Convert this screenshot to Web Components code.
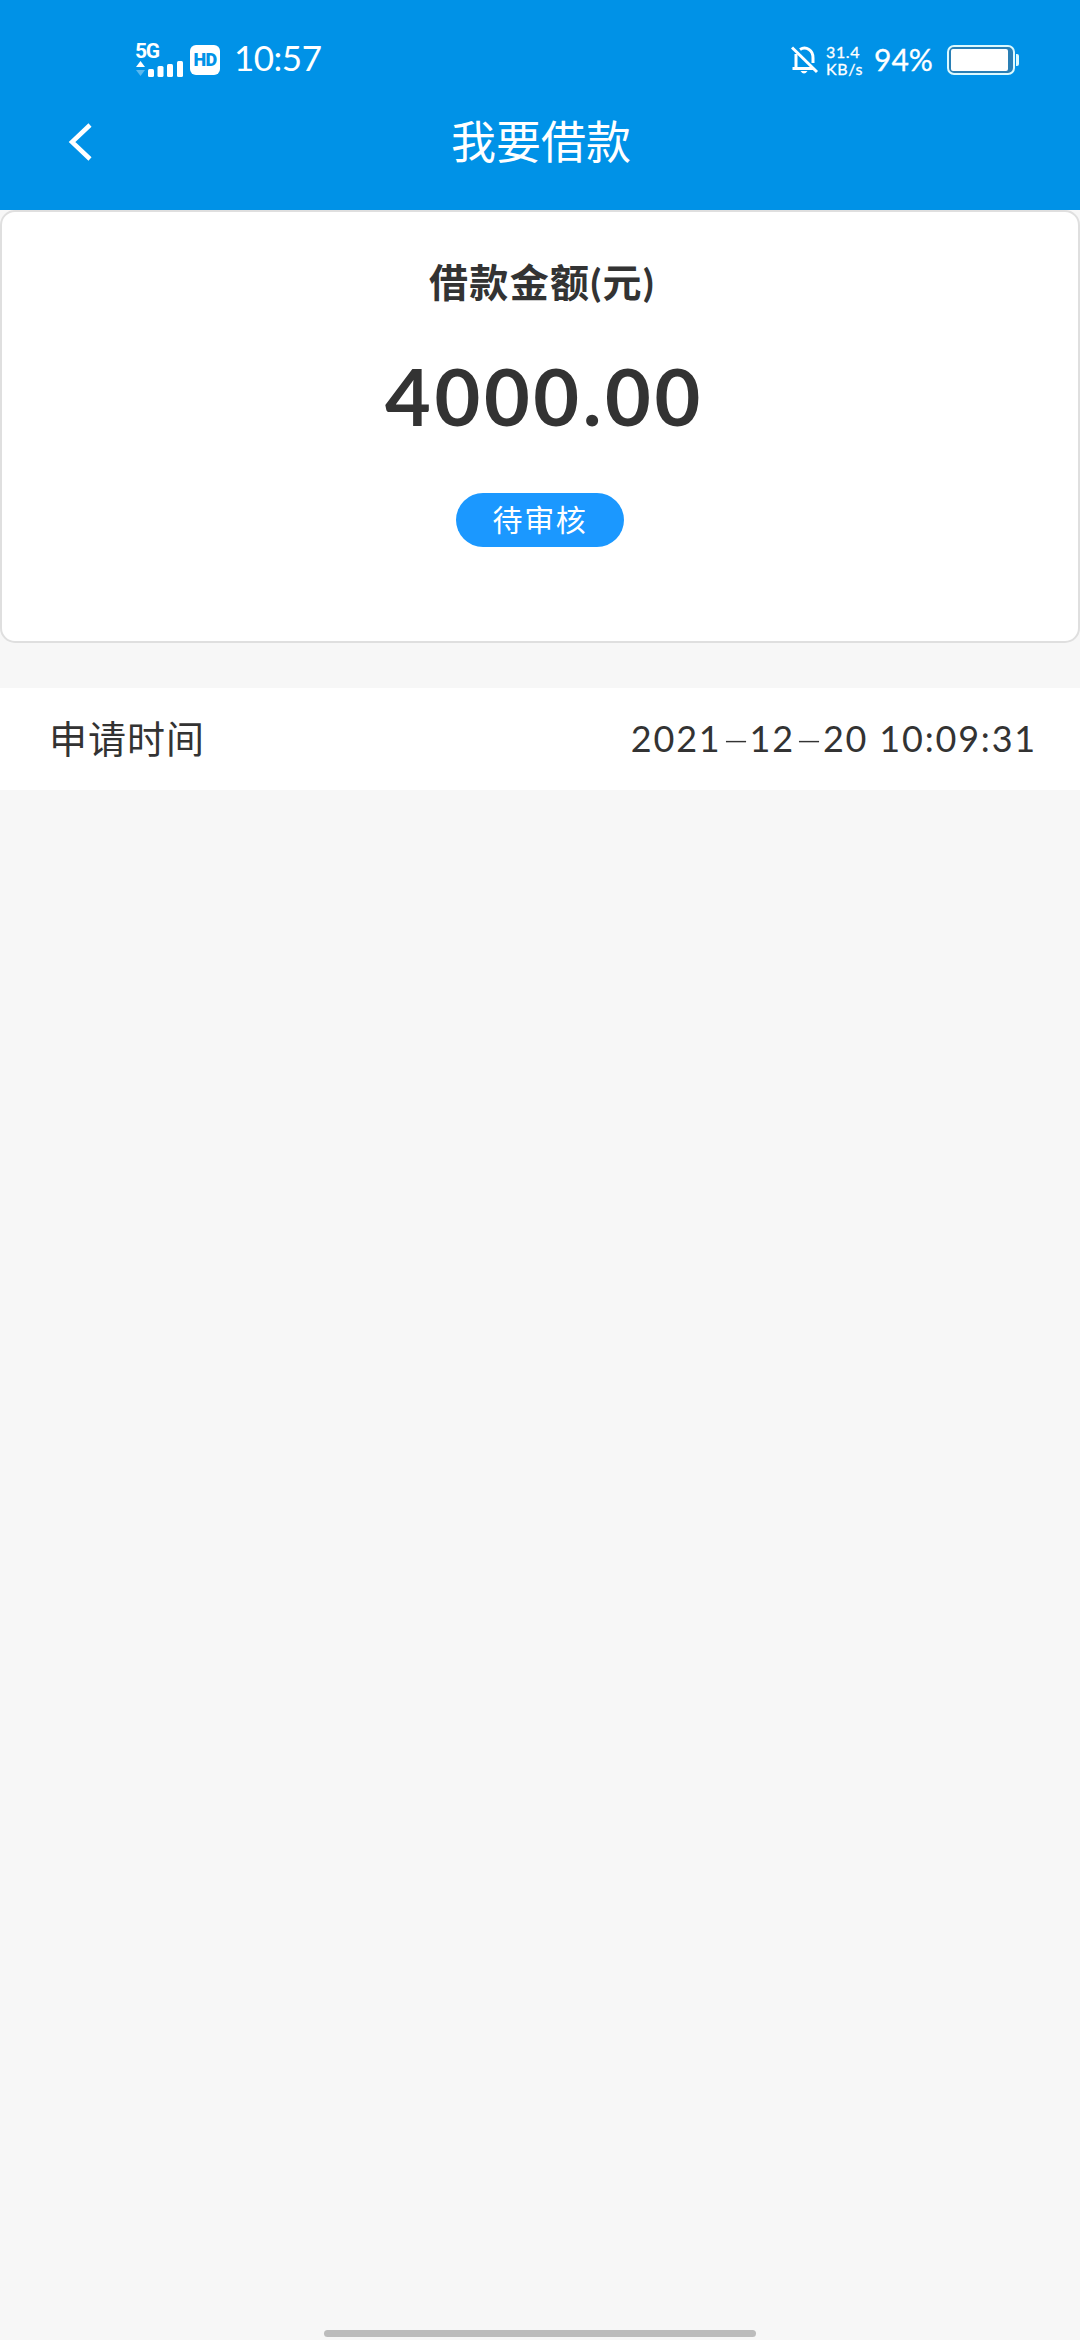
<!DOCTYPE html>
<html lang="zh-CN">
<head>
<meta charset="utf-8">
<title>我要借款</title>
<style>
    html, body {
        margin: 0;
        height: 100%;
    }

    body {
        background: #f7f7f7;
        color: #333;
        font-family: Lato, "Noto Sans CJK SC", sans-serif;
    }
</style>
</head>
<body>
<loan-page>
    <status-bar slot="top" time="10:57" speed="31.4" battery="94"></status-bar>
    <nav-bar slot="top">我要借款</nav-bar>
    <amount-card amount="4000.00" status="待审核">借款金额(元)</amount-card>
    <info-row label="申请时间">2021<i>-</i>12<i>-</i>20 10:09:31</info-row>
</loan-page>

<script>
class LoanPage extends HTMLElement {
    constructor() {
        super();
        this.attachShadow({mode: 'open'});
        this.shadowRoot.innerHTML = `
            <style>
                :host {
                    display: flex;
                    flex-direction: column;
                    height: 2340px;
                    overflow: hidden;
                }

                header {
                    height: 210px;
                    background: #0092e7;
                    color: #fff;
                }

                main {
                    flex: 1;
                    display: flex;
                    flex-direction: column;
                    gap: 45px;
                }

                .home {
                    align-self: center;
                    width: 432px;
                    height: 7px;
                    margin-bottom: 3px;
                    border-radius: 4px;
                    background: #bcbcbc;
                }
            </style>
            <header><slot name="top"></slot></header>
            <main><slot></slot></main>
            <div class="home"></div>
        `;
    }
}

class StatusBar extends HTMLElement {
    constructor() {
        super();
        this.attachShadow({mode: 'open'});
        this.shadowRoot.innerHTML = `
            <style>
                :host {
                    display: flex;
                    align-items: center;
                    box-sizing: border-box;
                    height: 120px;
                    padding: 0 60px 0 135px;
                    white-space: nowrap;
                }

                svg {
                    display: block;
                    flex: none;
                }

                .signal {
                    display: flex;
                    flex-direction: column;
                    width: 55px;
                    height: 34px;
                }

                .signal span {
                    height: 18px;
                    font: 700 21px/16px Roboto, sans-serif;
                    letter-spacing: -1.2px;
                }

                .hd {
                    width: 30px;
                    height: 30px;
                    border-radius: 6px;
                    background: #fff;
                    color: #0092e7;
                    font: 900 18px/30px Roboto, sans-serif;
                    letter-spacing: -0.6px;
                    text-align: center;
                }

                .time {
                    flex: 1;
                    margin: -7px 0 0 14px;
                    font-size: 35px;
                    line-height: 40px;
                    letter-spacing: -0.5px;
                }

                .speed {
                    width: 48px;
                    margin-left: 7px;
                    font-size: 16px;
                    line-height: 17px;
                    letter-spacing: 0.6px;
                    -webkit-text-stroke: 0.3px #fff;
                }

                .percent {
                    width: 73px;
                    margin-top: -2px;
                    font-size: 30px;
                    line-height: 40px;
                    -webkit-text-stroke: 0.3px #fff;
                }
            </style>
            <div class="signal">
                <span>5G</span>
                <svg width="50" height="16" viewBox="0 0 50 16" fill="#fff">
                    <path d="M1 6L5.5 0L10 6Z"/>
                    <path d="M1 9L5.5 15L10 9Z" opacity=".35"/>
                    <rect x="13" y="8" width="6" height="8" rx="1.5"/>
                    <rect x="22.5" y="5" width="6" height="11" rx="1.5"/>
                    <rect x="32" y="3" width="6" height="13" rx="1.5"/>
                    <rect x="42" y="0" width="6" height="16" rx="1.5"/>
                </svg>
            </div>
            <div class="hd">HD</div>
            <div class="time"></div>
            <svg width="28" height="30" viewBox="0 0 28 30" fill="none" stroke="#fff" stroke-width="3">
                <path d="M5 9V22M1.5 23.5H22M9 4.5Q13.5 1.5 18 4.5Q22 7 22 13V18"/>
                <path d="M1 2.5L26 27"/>
                <path d="M9.5 26H16.5Q13 31 9.5 26Z" fill="#fff" stroke="none"/>
            </svg>
            <div class="speed"><div class="rate"></div><div>KB/s</div></div>
            <div class="percent"></div>
            <svg width="73" height="30" viewBox="0 0 73 30">
                <rect x="1" y="1" width="66" height="28" rx="6" fill="#2a7fb5" stroke="#dcfaff" stroke-width="2"/>
                <rect x="4" y="4" width="57" height="22" rx="2" fill="#fff"/>
                <path d="M69 9H70Q72 9 72 11V19Q72 21 70 21H69Z" fill="#dcfaff"/>
            </svg>
        `;
    }

    connectedCallback() {
        this.shadowRoot.querySelector('.time').textContent = this.getAttribute('time');
        this.shadowRoot.querySelector('.rate').textContent = this.getAttribute('speed');
        this.shadowRoot.querySelector('.percent').textContent = this.getAttribute('battery') + '%';
    }
}

class NavBar extends HTMLElement {
    constructor() {
        super();
        this.attachShadow({mode: 'open'});
        this.shadowRoot.innerHTML = `
            <style>
                :host {
                    display: grid;
                    grid-template-columns: 100px 1fr 100px;
                    height: 44px;
                    align-items: center;
                }

                svg {
                    margin-left: 67px;
                }

                h1 {
                    margin: -1px 0 0 2px;
                    font-size: 45px;
                    font-weight: 400;
                    line-height: 44px;
                    text-align: center;
                }
            </style>
            <svg width="26" height="40" viewBox="0 0 26 40" fill="none" stroke="#fff" stroke-width="4.5">
                <path d="M23 3L5 20L23 37"/>
            </svg>
            <h1><slot></slot></h1>
        `;
    }
}

class AmountCard extends HTMLElement {
    constructor() {
        super();
        this.attachShadow({mode: 'open'});
        this.shadowRoot.innerHTML = `
            <style>
                :host {
                    display: flex;
                    flex-direction: column;
                    align-items: center;
                    box-sizing: border-box;
                    height: 433px;
                    padding-top: 46px;
                    border: 2px solid #dfdfdf;
                    border-radius: 15px;
                    background: #fff;
                }

                .title {
                    padding-left: 4px;
                    font-size: 39px;
                    font-weight: 700;
                    line-height: 48px;
                    letter-spacing: 1.4px;
                }

                .amount {
                    margin-top: 42px;
                    padding-left: 9px;
                    font-size: 79px;
                    font-weight: 700;
                    line-height: 96px;
                    letter-spacing: 3.6px;
                }

                .status {
                    width: 168px;
                    height: 54px;
                    margin-top: 49px;
                    border-radius: 27px;
                    background: #1b98ff;
                    color: #fff;
                    font-size: 30px;
                    line-height: 53px;
                    letter-spacing: 1.6px;
                    text-align: center;
                }
            </style>
            <div class="title"><slot></slot></div>
            <div class="amount"></div>
            <div class="status"></div>
        `;
    }

    connectedCallback() {
        this.shadowRoot.querySelector('.amount').textContent = this.getAttribute('amount');
        this.shadowRoot.querySelector('.status').textContent = this.getAttribute('status');
    }
}

class InfoRow extends HTMLElement {
    constructor() {
        super();
        this.attachShadow({mode: 'open'});
        this.shadowRoot.innerHTML = `
            <style>
                :host {
                    display: flex;
                    align-items: center;
                    justify-content: space-between;
                    box-sizing: border-box;
                    height: 102px;
                    padding: 0 43px 2px 49px;
                    background: #fff;
                    white-space: nowrap;
                }

                .label {
                    font-size: 38px;
                    line-height: 46px;
                    letter-spacing: 1px;
                }

                .value {
                    font-size: 36px;
                    line-height: 48px;
                    letter-spacing: 1.8px;
                }

                /* date separators are drawn as wide dashes */
                ::slotted(i) {
                    display: inline-block;
                    width: 28px;
                    font-style: normal;
                    font-weight: 300;
                    letter-spacing: 0;
                    text-align: center;
                    transform: scaleX(2.4);
                }
            </style>
            <span class="label"></span>
            <span class="value"><slot></slot></span>
        `;
    }

    connectedCallback() {
        this.shadowRoot.querySelector('.label').textContent = this.getAttribute('label');
    }
}

customElements.define('loan-page', LoanPage);
customElements.define('status-bar', StatusBar);
customElements.define('nav-bar', NavBar);
customElements.define('amount-card', AmountCard);
customElements.define('info-row', InfoRow);
</script>
</body>
</html>
